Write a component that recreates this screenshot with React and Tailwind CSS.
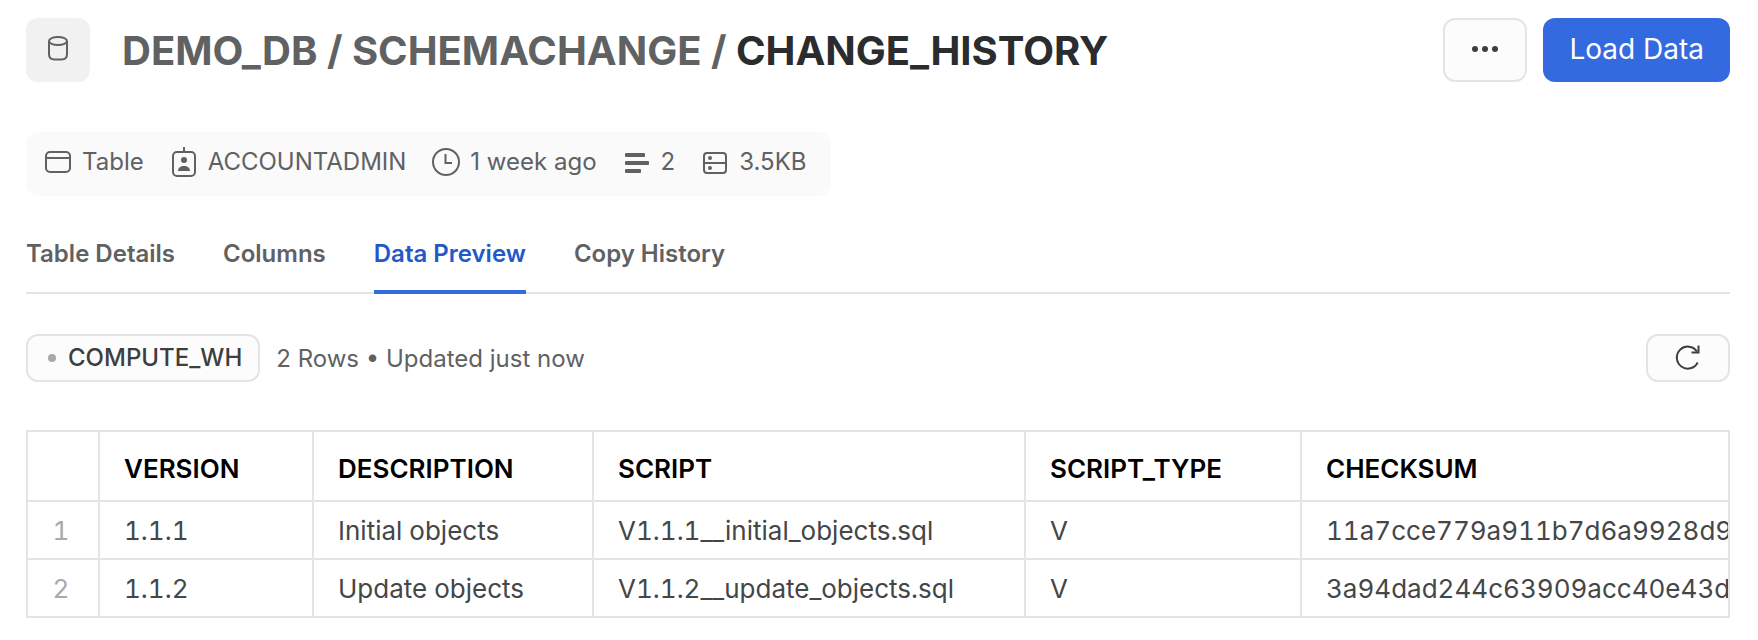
const TABS = ["Table Details", "Columns", "Data Preview", "Copy History"];
const COLUMNS = ["VERSION", "DESCRIPTION", "SCRIPT", "SCRIPT_TYPE", "CHECKSUM"];
const ROWS = [
  ["1.1.1", "Initial objects", "V1.1.1__initial_objects.sql", "V", "11a7cce779a911b7d6a9928d9"],
  ["1.1.2", "Update objects", "V1.1.2__update_objects.sql", "V", "3a94dad244c63909acc40e43d"],
];

function DatabaseIcon() {
  return (
    <svg width="24" height="30" viewBox="0 0 24 30" fill="none" stroke="#5f6163" strokeWidth="2" aria-hidden="true">
      <ellipse cx="12" cy="6" rx="9" ry="4" />
      <path d="M3 6v13C3 22.500 5 24.500 8.500 24.500h7c3.500 0 5.500-2 5.500-5.500V6" />
    </svg>
  );
}

function TableIcon() {
  return (
    <svg width="28" height="28" viewBox="0 0 28 28" fill="none" stroke="#5f6163" strokeWidth="2" aria-hidden="true">
      <rect x="2" y="4" width="24" height="20" rx="4" />
      <path d="M2 10h24" />
    </svg>
  );
}

function RoleIcon() {
  return (
    <svg width="28" height="32" viewBox="0 0 28 32" fill="none" stroke="#5f6163" strokeWidth="2" aria-hidden="true">
      <rect x="3" y="6" width="22" height="24" rx="4" />
      <path d="M14 1v5" />
      <circle cx="14" cy="14" r="3" fill="#5f6163" stroke="none" />
      <path d="M8 25c0-3.400 2.600-5 6-5s6 1.600 6 5z" fill="#5f6163" stroke="none" />
    </svg>
  );
}

function ClockIcon() {
  return (
    <svg width="28" height="28" viewBox="0 0 28 28" fill="none" stroke="#5f6163" strokeWidth="2" aria-hidden="true">
      <circle cx="14" cy="14" r="13" />
      <path d="M13.500 6v9H20" />
    </svg>
  );
}

function RowsIcon() {
  return (
    <svg width="28" height="24" viewBox="0 0 28 24" fill="#5f6163" aria-hidden="true">
      <rect x="2" y="3" width="20" height="4" rx="1" />
      <rect x="2" y="11" width="24" height="4" rx="1" />
      <rect x="2" y="19" width="16" height="4" rx="1" />
    </svg>
  );
}

function SizeIcon() {
  return (
    <svg width="28" height="26" viewBox="0 0 28 26" fill="none" stroke="#5f6163" strokeWidth="2" aria-hidden="true">
      <rect x="3" y="4" width="22" height="20" rx="3" />
      <path d="M3 14h22" />
      <circle cx="9" cy="9" r="2" fill="#5f6163" stroke="none" />
      <circle cx="9" cy="19" r="2" fill="#5f6163" stroke="none" />
    </svg>
  );
}

function RefreshIcon() {
  return (
    <svg width="28" height="28" viewBox="0 0 28 28" fill="none" stroke="#3c3e40" strokeWidth="2" aria-hidden="true">
      <path d="M23.700 18.500A11 11 0 1 1 23 7.500" />
      <path d="M24.500 1.500v7h-7" />
    </svg>
  );
}

function Meta({ icon, children }) {
  return (
    <li className="flex items-center gap-2.5">
      {icon}
      <span>{children}</span>
    </li>
  );
}

export default function App() {
  return (
    <main className="bg-white pt-[18px] pr-7 pb-6 pl-[26px] font-['Inter',sans-serif] text-2xl text-[#5f6163]">
      <header className="flex items-center justify-between gap-4">
        <div className="flex items-center gap-8">
          <div className="flex size-16 items-center justify-center rounded-xl bg-[#f1f1f1]">
            <DatabaseIcon />
          </div>
          <h1 className="pt-0.5 text-[40px] leading-[60px] font-bold whitespace-nowrap">
            DEMO_DB / SCHEMACHANGE / <span className="text-[#2a2c2e]">CHANGE_HISTORY</span>
          </h1>
        </div>
        <div className="flex gap-4">
          <button type="button" aria-label="More actions" className="flex h-16 w-[84px] items-center justify-center rounded-xl border-2 border-[#e3e4e4] bg-[#fcfcfc]">
            <svg width="28" height="8" viewBox="0 0 28 8" fill="#3c3e40" aria-hidden="true">
              <circle cx="4" cy="3" r="3" />
              <circle cx="14" cy="3" r="3" />
              <circle cx="24" cy="3" r="3" />
            </svg>
          </button>
          <button type="button" className="h-16 rounded-xl bg-[#346ae0] px-[26px] text-[28px] whitespace-nowrap text-white">
            Load Data
          </button>
        </div>
      </header>

      <ul className="mt-[50px] flex h-16 w-fit items-center gap-[26px] rounded-xl bg-[#fafafa] pr-6 pb-1 pl-[18px] whitespace-nowrap">
        <Meta icon={<TableIcon />}>Table</Meta>
        <Meta icon={<RoleIcon />}>ACCOUNTADMIN</Meta>
        <Meta icon={<ClockIcon />}>1 week ago</Meta>
        <Meta icon={<RowsIcon />}>2</Meta>
        <Meta icon={<SizeIcon />}>3.5KB</Meta>
      </ul>

      <nav className="mt-10 flex gap-12 border-b-2 border-[#e3e4e4] font-semibold">
        {TABS.map((tab) => (
          <a
            key={tab}
            href="#"
            aria-current={tab === "Data Preview" ? "page" : undefined}
            className={
              tab === "Data Preview"
                ? "-mb-0.5 border-b-4 border-[#346ae0] pt-0.5 pb-5 text-[#2458c8]"
                : "-mb-0.5 border-b-4 border-transparent pt-0.5 pb-5"
            }
          >
            {tab}
          </a>
        ))}
      </nav>

      <div className="mt-10 flex items-center justify-between">
        <div className="flex items-center gap-4">
          <button type="button" className="flex h-12 items-center gap-3 rounded-xl border-2 border-[#e3e4e4] bg-[#fcfcfc] pr-4 pl-5 font-medium text-[#3c3e40]">
            <span className="size-2 rounded-full bg-[#a8a9aa]" />
            COMPUTE_WH
          </button>
          <p className="pt-0.5">2 Rows • Updated just now</p>
        </div>
        <button type="button" aria-label="Refresh" className="flex h-12 w-[84px] items-center justify-center rounded-xl border-2 border-[#e3e4e4] bg-[#fcfcfc]">
          <RefreshIcon />
        </button>
      </div>

      <div className="mt-12 overflow-hidden border-2 border-[#e3e4e4]">
        <table className="w-full table-fixed border-separate border-spacing-0 text-left text-[26px] whitespace-nowrap text-[#444648] tabular-nums">
          <colgroup>
            <col className="w-[72px]" />
            <col className="w-[214px]" />
            <col className="w-[280px]" />
            <col className="w-[432px]" />
            <col className="w-[276px]" />
            <col />
          </colgroup>
          <thead>
            <tr className="h-[70px] text-black">
              <td className="border-r-2 border-b-2 border-[#e3e4e4]" />
              {COLUMNS.map((name) => (
                <th key={name} scope="col" className="border-r-2 border-b-2 border-[#e3e4e4] pt-1.5 pl-6 font-semibold last:border-r-0">
                  {name}
                </th>
              ))}
            </tr>
          </thead>
          <tbody>
            {ROWS.map((row, i) => (
              <tr key={row[0]} className="group h-[58px] last:h-14">
                <td className="border-r-2 border-b-2 border-[#e3e4e4] pt-0.5 pr-1 text-center text-[#a8a9aa] group-last:border-b-0">{i + 1}</td>
                {row.map((cell, j) => (
                  <td key={j} className="border-r-2 border-b-2 border-[#e3e4e4] pt-0.5 pl-6 group-last:border-b-0 last:border-r-0">
                    {cell}
                  </td>
                ))}
              </tr>
            ))}
          </tbody>
        </table>
      </div>
    </main>
  );
}
